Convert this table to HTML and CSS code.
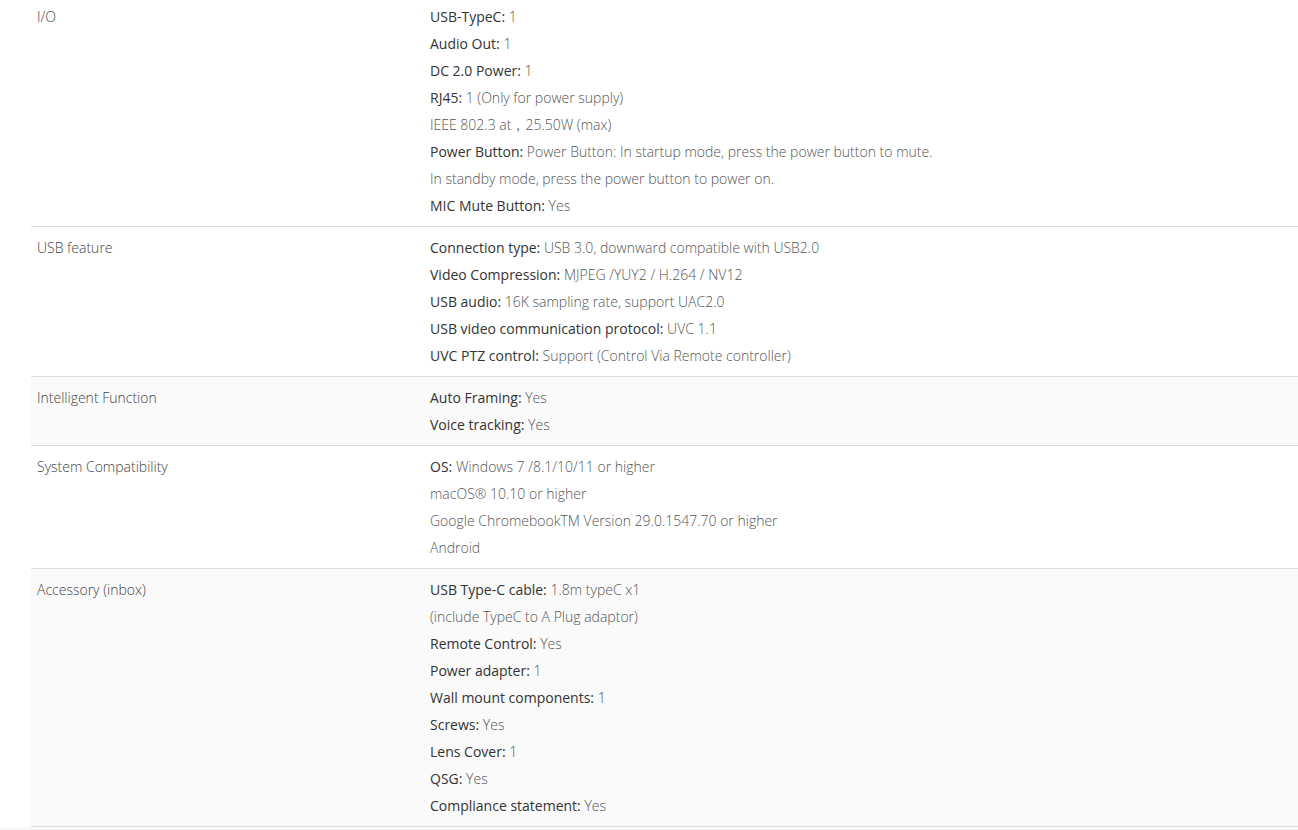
FILE: index.html
```html
<!DOCTYPE html>
<html lang="en">
<head>
<meta charset="utf-8">
<title>Specifications</title>
<link rel="stylesheet" href="styles.css">
</head>
<body>
<div class="page">
  <div class="specs">
    <div class="row">
      <div class="name">I/O</div>
      <div class="vals">
        <p><b>USB-TypeC:</b> 1</p>
        <p><b>Audio Out:</b> 1</p>
        <p><b>DC 2.0 Power:</b> 1</p>
        <p><b>RJ45:</b> 1 (Only for power supply)</p>
        <p>IEEE 802.3 at，25.50W (max)</p>
        <p><b>Power Button:</b> Power Button: In startup mode, press the power button to mute.</p>
        <p>In standby mode, press the power button to power on.</p>
        <p><b>MIC Mute Button:</b> Yes</p>
      </div>
    </div>
    <div class="row">
      <div class="name">USB feature</div>
      <div class="vals">
        <p><b>Connection type:</b> USB 3.0, downward compatible with USB2.0</p>
        <p><b>Video Compression:</b> MJPEG /YUY2 / H.264 / NV12</p>
        <p><b>USB audio:</b> 16K sampling rate, support UAC2.0</p>
        <p><b>USB video communication protocol:</b> UVC 1.1</p>
        <p><b>UVC PTZ control:</b> Support (Control Via Remote controller)</p>
      </div>
    </div>
    <div class="row shade">
      <div class="name">Intelligent Function</div>
      <div class="vals">
        <p><b>Auto Framing:</b> Yes</p>
        <p><b>Voice tracking:</b> Yes</p>
      </div>
    </div>
    <div class="row">
      <div class="name">System Compatibility</div>
      <div class="vals">
        <p><b>OS:</b> Windows 7 /8.1/10/11 or higher</p>
        <p>macOS® 10.10 or higher</p>
        <p>Google ChromebookTM Version 29.0.1547.70 or higher</p>
        <p>Android</p>
      </div>
    </div>
    <div class="row shade">
      <div class="name">Accessory (inbox)</div>
      <div class="vals">
        <p><b>USB Type-C cable:</b> 1.8m typeC x1</p>
        <p>(include TypeC to A Plug adaptor)</p>
        <p><b>Remote Control:</b> Yes</p>
        <p><b>Power adapter:</b> 1</p>
        <p><b>Wall mount components:</b> 1</p>
        <p><b>Screws:</b> Yes</p>
        <p><b>Lens Cover:</b> 1</p>
        <p><b>QSG:</b> Yes</p>
        <p><b>Compliance statement:</b> Yes</p>
      </div>
    </div>
  </div>
  <div class="fade"></div>
</div>
</body>
</html>
```
FILE: styles.css
```css
html, body {
  margin: 0;
  padding: 0;
  background: #ffffff;
}
body {
  font-family: "Open Sans", "Liberation Sans", sans-serif;
  font-size: 14px;
  line-height: 27px;
  font-weight: 300;
  color: #555555;
  overflow: hidden;
}
.page {
  width: 1298px;
}
.specs {
  margin: -4px 0 0 31px;
}
.row {
  display: grid;
  grid-template-columns: 393px 1fr;
  border-bottom: 1px solid #dddddd;
}
.row.shade {
  background: #fafafa;
}
.name {
  padding: 7px 6px;
  color: #444444;
}
.vals {
  padding: 7px 6px;
}
.vals p {
  margin: 0;
}
.vals b {
  font-weight: 400;
  color: #333333;
}
.fade {
  height: 6px;
  background: linear-gradient(#fafafa, #f0f0f0);
}
```
